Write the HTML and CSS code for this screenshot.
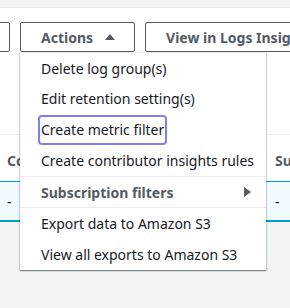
FILE: index.html
```html
<!DOCTYPE html>
<html>
<head>
<meta charset="utf-8">
<link rel="stylesheet" href="styles.css">
</head>
<body>
<div class="strip"></div>
<div class="panel">
  <div class="toolbar">
    <button class="btn btn-prev" aria-label="Refresh"></button>
    <div class="dropdown">
      <button class="btn">Actions
        <svg class="caret-up" width="10" height="6" viewBox="0 0 10 6"><path d="M0 6 L5 0 L10 6 Z" fill="#545b64"/></svg>
      </button>
      <ul class="menu">
        <li class="item"><span>Delete log group(s)</span></li>
        <li class="item"><span>Edit retention setting(s)</span></li>
        <li class="item"><span class="focused">Create metric filter</span></li>
        <li class="item"><span>Create contributor insights rules</span></li>
        <li class="item group">
          <span>Subscription filters</span>
          <svg width="7" height="10" viewBox="0 0 7 10"><path d="M0 0 L7 5 L0 10 Z" fill="#545b64"/></svg>
        </li>
        <li class="item"><span>Export data to Amazon S3</span></li>
        <li class="item"><span>View all exports to Amazon S3</span></li>
      </ul>
    </div>
    <button class="btn btn-last">View in Logs Insights</button>
  </div>
  <div class="table">
    <div class="row head">
      <div class="cell">Contributor Insights</div>
      <div class="cell">Subscription filters</div>
    </div>
    <div class="row selected">
      <div class="cell">-</div>
      <div class="cell">-</div>
    </div>
  </div>
</div>
</body>
</html>
```
FILE: styles.css
```css
* { box-sizing: border-box; }
html {
  overflow: hidden;
  background: #f2f3f3;
}
body {
  margin: 0;
  padding: 0;
  min-height: 308px;
  background: #f2f3f3;
  font-family: "Noto Sans", "Open Sans", Arial, sans-serif;
  font-size: 14px;
  color: #16191f;
}
.strip { height: 7px; }
.panel {
  background: #ffffff;
  border-top: 1px solid #eaeded;
}
.toolbar {
  display: flex;
  gap: 10px;
  padding-top: 14px;
  white-space: nowrap;
  overflow: hidden;
  overflow: visible;
}
.btn {
  display: flex;
  align-items: center;
  height: 30px;
  margin: 0;
  padding: 0 20px;
  border: 1px solid #545b64;
  border-radius: 2px;
  background: #ffffff;
  color: #545b64;
  font-family: inherit;
  font-size: 14px;
  font-weight: 700;
  flex-shrink: 0;
}
.btn-prev {
  width: 40px;
  padding: 0;
  margin-left: -30px;
}
.caret-up { margin-left: 12px; margin-right: -1px; margin-top: -1px; }
.dropdown { position: relative; flex-shrink: 0; }
.menu {
  position: absolute;
  top: 100%;
  left: 0;
  width: 246px;
  margin: 0;
  padding: 0;
  list-style: none;
  background: #ffffff;
  border-top: 1px solid #eaeded;
  box-shadow: 0 1px 1px 0 rgba(0,28,36,.3), 1px 1px 1px 0 rgba(0,28,36,.15), -1px 1px 1px 0 rgba(0,28,36,.15);
  z-index: 5;
}
.item {
  height: 31px;
  display: flex;
  align-items: center;
  padding: 0 15px 0 21px;
  white-space: nowrap;
}
.item:first-child { height: 30px; }
.group {
  height: 32px;
  justify-content: space-between;
  border-top: 1px solid #eaeded;
  border-bottom: 1px solid #eaeded;
  color: #545b64;
  font-weight: 700;
}
.focused {
  display: inline-block;
  line-height: 20px;
  padding: 3px 1px;
  margin: 0 -1px;
  outline: 2px solid #7f7ff5;
  border-radius: 2px;
}
.table {
  margin-top: 82px;
  border-top: 1px solid #eaeded;
}
.row {
  display: grid;
  grid-template-columns: 268px 1fr;
  white-space: nowrap;
}
.cell { padding-left: 7px; overflow: hidden; }
.head {
  height: 46px;
  align-items: center;
  padding-top: 4px;
  color: #545b64;
  font-weight: 700;
}
.selected {
  height: 41px;
  align-items: center;
  background: #f1faff;
  border-top: 1px solid #00a1c9;
  border-bottom: 2px solid #00a1c9;
}
```
